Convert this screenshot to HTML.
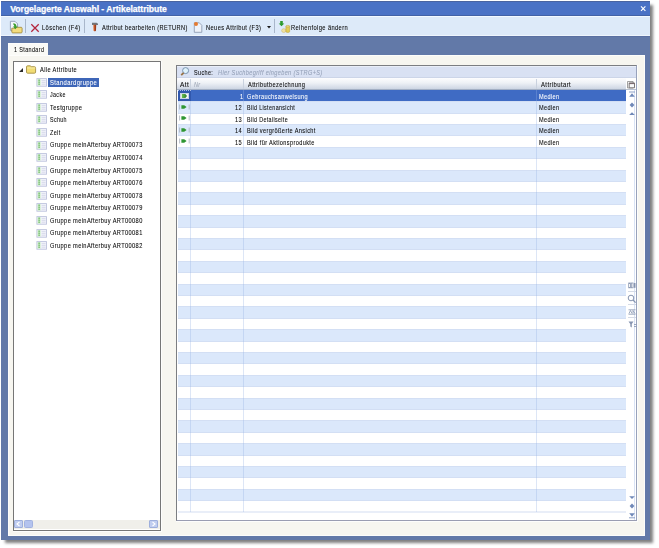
<!DOCTYPE html><html><head><meta charset="utf-8"><style>
*{margin:0;padding:0;box-sizing:border-box}
html,body{width:659px;height:548px;background:#fff;overflow:hidden;font-family:"Liberation Sans",sans-serif;font-size:7.4px;color:#080808}
div,span,svg{position:absolute}
.t{white-space:pre;line-height:12px;height:12px;transform-origin:0 0;letter-spacing:0.5px;-webkit-text-stroke:0.08px currentColor}
</style></head><body>
<div style="left:5px;top:5px;width:648px;height:538px;background:rgba(0,0,0,0.5);filter:blur(1.5px)"></div>
<div style="left:1px;top:1px;width:649px;height:539px;background:#6279a8"></div>
<div style="left:1px;top:1px;width:649px;height:15px;background:#4a72c5;border-top:1px solid #4a64a0;border-bottom:1px solid #4262a6"></div>
<span style="left:10.3px;top:4.1px;white-space:pre;color:#fff;font-weight:bold;font-size:8.6px;line-height:11px;letter-spacing:-0.03px;-webkit-text-stroke:0.25px #fff">Vorgelagerte Auswahl - Artikelattribute</span>
<svg style="left:638px;top:3px" width="10" height="10" viewBox="0 0 10 10"><path d="M3 3.4L7.4 7.8M7.4 3.4L3 7.8" stroke="#fff" stroke-width="1.15"/></svg>
<div style="left:1px;top:16px;width:649px;height:20px;background:#ddeaf9;border-top:1px solid #f2f9ff;border-bottom:1px solid #eef5fd"></div>
<div style="left:1px;top:36px;width:649px;height:1px;background:#5a70a2"></div>
<svg style="left:9px;top:20px" width="14" height="14" viewBox="0 0 14 14"><path d="M1.4 1.3h4.6l2.6 2.6v6.5H1.4z" fill="#f4f7fc" stroke="#8e9cb6" stroke-width="0.9"/><path d="M2.8 8.2h3l0.8-0.9h5.6c0.5 0 0.9 0.4 0.9 0.9v3.8c0 0.5-0.4 0.9-0.9 0.9H3.7c-0.5 0-0.9-0.4-0.9-0.9z" fill="#f3dc7e" stroke="#9c8436" stroke-width="0.8"/><path d="M4.3 3.2c1.8 0.2 3 1 3.1 2.6v0.8h1.3L6.3 9.2 3.9 6.6h1.3V6c0-0.8-0.4-1.4-0.9-1.6z" fill="#3d9d2d"/></svg>
<div style="left:25px;top:19px;width:1px;height:14px;background:#a9b7cb"></div>
<svg style="left:30px;top:23px" width="10" height="10" viewBox="0 0 10 10"><path d="M1.3 1.3L8.7 8.7M8.7 1.3L1.3 8.7" stroke="#b3243c" stroke-width="1.25"/></svg>
<span class="t" style="left:41.6px;top:21.93px;transform:scaleX(0.7781);">Löschen (F4)</span>
<div style="left:84px;top:19px;width:1px;height:14px;background:#a9b7cb"></div>
<svg style="left:91px;top:22px" width="8" height="10" viewBox="0 0 8 10"><defs><linearGradient id="hg" x1="0" x2="1"><stop offset="0" stop-color="#e8763a"/><stop offset="1" stop-color="#8a2a12"/></linearGradient></defs><path d="M1 0.8h4.6l1.4 0.9v1.2H1z" fill="#71767c"/><path d="M2.3 2.8h2.9l-0.2 5.6c0 0.5-0.6 0.8-1.25 0.8s-1.25-0.3-1.25-0.8z" fill="url(#hg)"/></svg>
<span class="t" style="left:102.0px;top:21.93px;transform:scaleX(0.7635);">Attribut bearbeiten (RETURN)</span>
<svg style="left:193px;top:21px" width="10" height="12" viewBox="0 0 10 12"><path d="M1.3 1.8h5l2.5 2.5v7H1.3z" fill="#eef2f9" stroke="#8593ab" stroke-width="0.8"/><circle cx="3" cy="2.9" r="2" fill="#e57a30"/></svg>
<span class="t" style="left:206.3px;top:21.93px;transform:scaleX(0.7722);">Neues Attribut (F3)</span>
<svg style="left:267px;top:25.5px" width="4" height="3" viewBox="0 0 4 3"><path d="M0 0h4L2 2.4z" fill="#1a1a1a"/></svg>
<div style="left:274px;top:19px;width:1px;height:14px;background:#a9b7cb"></div>
<svg style="left:278px;top:20px" width="13" height="14" viewBox="0 0 13 14"><path d="M2.2 1h2.6v2.4h1.5L3.5 6.3 0.7 3.4h1.5z" fill="#2c9a2e"/><ellipse cx="5.8" cy="10.6" rx="2.2" ry="1.9" fill="#efe0a0" stroke="#c9b269" stroke-width="0.5"/><path d="M7.9 6.2h3.8v5.2c0 0.6-0.85 1-1.9 1s-1.9-0.4-1.9-1z" fill="#e2cc58" stroke="#b59a3c" stroke-width="0.5"/><ellipse cx="9.8" cy="6.2" rx="1.9" ry="0.8" fill="#f2e28e" stroke="#b59a3c" stroke-width="0.45"/></svg>
<span class="t" style="left:290.9px;top:21.93px;transform:scaleX(0.7764);">Reihenfolge ändern</span>
<div style="left:8px;top:43px;width:40px;height:13px;background:#fafaf6;border-left:1px solid #fdfdfc;border-top:1px solid #fdfdfc"></div>
<span class="t" style="left:13.7px;top:43.93px;transform:scaleX(0.7374);">1 Standard</span>
<div style="left:8px;top:55px;width:637px;height:481px;background:#f7f6f0;border:1px solid #fdfdfb"></div>
<div style="left:13px;top:61px;width:149px;height:471px;border-right:1px solid #fdfdfc;border-bottom:1px solid #fdfdfc"></div>
<div style="left:13px;top:61px;width:148px;height:470px;background:#fff;border:1px solid #767676"></div>
<svg style="left:19px;top:68px" width="4" height="4" viewBox="0 0 4 4"><path d="M4 0V4H0z" fill="#2a2a2a"/></svg>
<svg style="left:26px;top:64.5px" width="11" height="9" viewBox="0 0 11 9"><path d="M1.6 0.8h2.6l0.9 0.9h3.4c0.7 0 1.1 0.4 1.1 1.1v4.3c0 0.7-0.4 1.1-1.1 1.1H1.6c-0.7 0-1.1-0.4-1.1-1.1V1.9c0-0.7 0.4-1.1 1.1-1.1z" fill="#f1dc74" stroke="#a58f45" stroke-width="0.9"/><path d="M1.2 3h8.2" stroke="#faf0b8" stroke-width="0.8"/></svg>
<span class="t" style="left:39.6px;top:64.03px;transform:scaleX(0.7662);">Alle Attribute</span>
<svg style="left:36px;top:77.67px" width="11" height="9" viewBox="0 0 11 9"><rect x="0.9" y="0.6" width="9.6" height="7.6" fill="#f3f4fb" stroke="#bcc2dc" stroke-width="0.9"/><rect x="1.6" y="1.2" width="3" height="6.4" fill="#cdeec5"/><path d="M3.1 1.6v1.2M3.1 3.6v1.2M3.1 5.6v1.2" stroke="#3f9a45" stroke-width="1"/><path d="M5.6 2.6h4M5.6 4.4h4M5.6 6.2h4" stroke="#d0d4e6" stroke-width="0.8"/></svg>
<div style="left:48px;top:77.57px;width:51px;height:9.3px;background:#3e66b8"></div>
<span class="t" style="left:50.1px;top:76.6px;transform:scaleX(0.7862);color:#fff">Standardgruppe</span>
<svg style="left:36px;top:90.24px" width="11" height="9" viewBox="0 0 11 9"><rect x="0.9" y="0.6" width="9.6" height="7.6" fill="#f3f4fb" stroke="#bcc2dc" stroke-width="0.9"/><rect x="1.6" y="1.2" width="3" height="6.4" fill="#cdeec5"/><path d="M3.1 1.6v1.2M3.1 3.6v1.2M3.1 5.6v1.2" stroke="#3f9a45" stroke-width="1"/><path d="M5.6 2.6h4M5.6 4.4h4M5.6 6.2h4" stroke="#d0d4e6" stroke-width="0.8"/></svg>
<span class="t" style="left:50.1px;top:89.17px;transform:scaleX(0.7218);">Jacke</span>
<svg style="left:36px;top:102.81px" width="11" height="9" viewBox="0 0 11 9"><rect x="0.9" y="0.6" width="9.6" height="7.6" fill="#f3f4fb" stroke="#bcc2dc" stroke-width="0.9"/><rect x="1.6" y="1.2" width="3" height="6.4" fill="#cdeec5"/><path d="M3.1 1.6v1.2M3.1 3.6v1.2M3.1 5.6v1.2" stroke="#3f9a45" stroke-width="1"/><path d="M5.6 2.6h4M5.6 4.4h4M5.6 6.2h4" stroke="#d0d4e6" stroke-width="0.8"/></svg>
<span class="t" style="left:50.1px;top:101.74px;transform:scaleX(0.7789);">Testgruppe</span>
<svg style="left:36px;top:115.38px" width="11" height="9" viewBox="0 0 11 9"><rect x="0.9" y="0.6" width="9.6" height="7.6" fill="#f3f4fb" stroke="#bcc2dc" stroke-width="0.9"/><rect x="1.6" y="1.2" width="3" height="6.4" fill="#cdeec5"/><path d="M3.1 1.6v1.2M3.1 3.6v1.2M3.1 5.6v1.2" stroke="#3f9a45" stroke-width="1"/><path d="M5.6 2.6h4M5.6 4.4h4M5.6 6.2h4" stroke="#d0d4e6" stroke-width="0.8"/></svg>
<span class="t" style="left:50.1px;top:114.31px;transform:scaleX(0.7222);">Schuh</span>
<svg style="left:36px;top:127.95px" width="11" height="9" viewBox="0 0 11 9"><rect x="0.9" y="0.6" width="9.6" height="7.6" fill="#f3f4fb" stroke="#bcc2dc" stroke-width="0.9"/><rect x="1.6" y="1.2" width="3" height="6.4" fill="#cdeec5"/><path d="M3.1 1.6v1.2M3.1 3.6v1.2M3.1 5.6v1.2" stroke="#3f9a45" stroke-width="1"/><path d="M5.6 2.6h4M5.6 4.4h4M5.6 6.2h4" stroke="#d0d4e6" stroke-width="0.8"/></svg>
<span class="t" style="left:50.1px;top:126.88px;transform:scaleX(0.7336);">Zelt</span>
<svg style="left:36px;top:140.52px" width="11" height="9" viewBox="0 0 11 9"><rect x="0.9" y="0.6" width="9.6" height="7.6" fill="#f3f4fb" stroke="#bcc2dc" stroke-width="0.9"/><rect x="1.6" y="1.2" width="3" height="6.4" fill="#cdeec5"/><path d="M3.1 1.6v1.2M3.1 3.6v1.2M3.1 5.6v1.2" stroke="#3f9a45" stroke-width="1"/><path d="M5.6 2.6h4M5.6 4.4h4M5.6 6.2h4" stroke="#d0d4e6" stroke-width="0.8"/></svg>
<span class="t" style="left:50.1px;top:139.45px;transform:scaleX(0.7652);">Gruppe meinAfterbuy ART00073</span>
<svg style="left:36px;top:153.09px" width="11" height="9" viewBox="0 0 11 9"><rect x="0.9" y="0.6" width="9.6" height="7.6" fill="#f3f4fb" stroke="#bcc2dc" stroke-width="0.9"/><rect x="1.6" y="1.2" width="3" height="6.4" fill="#cdeec5"/><path d="M3.1 1.6v1.2M3.1 3.6v1.2M3.1 5.6v1.2" stroke="#3f9a45" stroke-width="1"/><path d="M5.6 2.6h4M5.6 4.4h4M5.6 6.2h4" stroke="#d0d4e6" stroke-width="0.8"/></svg>
<span class="t" style="left:50.1px;top:152.02px;transform:scaleX(0.7652);">Gruppe meinAfterbuy ART00074</span>
<svg style="left:36px;top:165.66px" width="11" height="9" viewBox="0 0 11 9"><rect x="0.9" y="0.6" width="9.6" height="7.6" fill="#f3f4fb" stroke="#bcc2dc" stroke-width="0.9"/><rect x="1.6" y="1.2" width="3" height="6.4" fill="#cdeec5"/><path d="M3.1 1.6v1.2M3.1 3.6v1.2M3.1 5.6v1.2" stroke="#3f9a45" stroke-width="1"/><path d="M5.6 2.6h4M5.6 4.4h4M5.6 6.2h4" stroke="#d0d4e6" stroke-width="0.8"/></svg>
<span class="t" style="left:50.1px;top:164.59px;transform:scaleX(0.7652);">Gruppe meinAfterbuy ART00075</span>
<svg style="left:36px;top:178.23px" width="11" height="9" viewBox="0 0 11 9"><rect x="0.9" y="0.6" width="9.6" height="7.6" fill="#f3f4fb" stroke="#bcc2dc" stroke-width="0.9"/><rect x="1.6" y="1.2" width="3" height="6.4" fill="#cdeec5"/><path d="M3.1 1.6v1.2M3.1 3.6v1.2M3.1 5.6v1.2" stroke="#3f9a45" stroke-width="1"/><path d="M5.6 2.6h4M5.6 4.4h4M5.6 6.2h4" stroke="#d0d4e6" stroke-width="0.8"/></svg>
<span class="t" style="left:50.1px;top:177.16px;transform:scaleX(0.7652);">Gruppe meinAfterbuy ART00076</span>
<svg style="left:36px;top:190.8px" width="11" height="9" viewBox="0 0 11 9"><rect x="0.9" y="0.6" width="9.6" height="7.6" fill="#f3f4fb" stroke="#bcc2dc" stroke-width="0.9"/><rect x="1.6" y="1.2" width="3" height="6.4" fill="#cdeec5"/><path d="M3.1 1.6v1.2M3.1 3.6v1.2M3.1 5.6v1.2" stroke="#3f9a45" stroke-width="1"/><path d="M5.6 2.6h4M5.6 4.4h4M5.6 6.2h4" stroke="#d0d4e6" stroke-width="0.8"/></svg>
<span class="t" style="left:50.1px;top:189.73px;transform:scaleX(0.7652);">Gruppe meinAfterbuy ART00078</span>
<svg style="left:36px;top:203.37px" width="11" height="9" viewBox="0 0 11 9"><rect x="0.9" y="0.6" width="9.6" height="7.6" fill="#f3f4fb" stroke="#bcc2dc" stroke-width="0.9"/><rect x="1.6" y="1.2" width="3" height="6.4" fill="#cdeec5"/><path d="M3.1 1.6v1.2M3.1 3.6v1.2M3.1 5.6v1.2" stroke="#3f9a45" stroke-width="1"/><path d="M5.6 2.6h4M5.6 4.4h4M5.6 6.2h4" stroke="#d0d4e6" stroke-width="0.8"/></svg>
<span class="t" style="left:50.1px;top:202.3px;transform:scaleX(0.7652);">Gruppe meinAfterbuy ART00079</span>
<svg style="left:36px;top:215.94px" width="11" height="9" viewBox="0 0 11 9"><rect x="0.9" y="0.6" width="9.6" height="7.6" fill="#f3f4fb" stroke="#bcc2dc" stroke-width="0.9"/><rect x="1.6" y="1.2" width="3" height="6.4" fill="#cdeec5"/><path d="M3.1 1.6v1.2M3.1 3.6v1.2M3.1 5.6v1.2" stroke="#3f9a45" stroke-width="1"/><path d="M5.6 2.6h4M5.6 4.4h4M5.6 6.2h4" stroke="#d0d4e6" stroke-width="0.8"/></svg>
<span class="t" style="left:50.1px;top:214.87px;transform:scaleX(0.7652);">Gruppe meinAfterbuy ART00080</span>
<svg style="left:36px;top:228.51px" width="11" height="9" viewBox="0 0 11 9"><rect x="0.9" y="0.6" width="9.6" height="7.6" fill="#f3f4fb" stroke="#bcc2dc" stroke-width="0.9"/><rect x="1.6" y="1.2" width="3" height="6.4" fill="#cdeec5"/><path d="M3.1 1.6v1.2M3.1 3.6v1.2M3.1 5.6v1.2" stroke="#3f9a45" stroke-width="1"/><path d="M5.6 2.6h4M5.6 4.4h4M5.6 6.2h4" stroke="#d0d4e6" stroke-width="0.8"/></svg>
<span class="t" style="left:50.1px;top:227.44px;transform:scaleX(0.7652);">Gruppe meinAfterbuy ART00081</span>
<svg style="left:36px;top:241.08px" width="11" height="9" viewBox="0 0 11 9"><rect x="0.9" y="0.6" width="9.6" height="7.6" fill="#f3f4fb" stroke="#bcc2dc" stroke-width="0.9"/><rect x="1.6" y="1.2" width="3" height="6.4" fill="#cdeec5"/><path d="M3.1 1.6v1.2M3.1 3.6v1.2M3.1 5.6v1.2" stroke="#3f9a45" stroke-width="1"/><path d="M5.6 2.6h4M5.6 4.4h4M5.6 6.2h4" stroke="#d0d4e6" stroke-width="0.8"/></svg>
<span class="t" style="left:50.1px;top:240.01px;transform:scaleX(0.7652);">Gruppe meinAfterbuy ART00082</span>
<div style="left:14px;top:520px;width:146px;height:9px;background:#f0efea"></div>
<div style="left:14px;top:520px;width:9px;height:8px;background:#c0cdf0;border:1px solid #9eafdc;border-radius:1px"></div>
<svg style="left:15px;top:521px" width="7" height="6" viewBox="0 0 7 6"><path d="M4.5 0.8L2 3l2.5 2.2" fill="none" stroke="#fff" stroke-width="1.1"/></svg>
<div style="left:23.5px;top:520px;width:9px;height:8px;background:#b4c3ee;border:1px solid #a2b2e0;border-radius:1.5px"></div>
<div style="left:149px;top:520px;width:9px;height:8px;background:#c0cdf0;border:1px solid #9eafdc;border-radius:1px"></div>
<svg style="left:150px;top:521px" width="7" height="6" viewBox="0 0 7 6"><path d="M2.5 0.8L5 3 2.5 5.2" fill="none" stroke="#fff" stroke-width="1.1"/></svg>
<div style="left:176px;top:65px;width:462px;height:457px;border-right:1px solid #fdfdfc;border-bottom:1px solid #fdfdfc"></div>
<div style="left:176px;top:65px;width:461px;height:456px;background:#fff;border:1px solid #7c7e82;border-right-color:#98a2bb;border-bottom-color:#9a9db2"></div>
<div style="left:634px;top:90px;width:1px;height:430px;background:#d9e3f5"></div>
<div style="left:177px;top:66px;width:459px;height:12px;background:#d9e1f3;border-top:1px solid #eaeff9;border-bottom:1px solid #ccd5e8"></div>
<svg style="left:179px;top:66px" width="11" height="11" viewBox="0 0 11 11"><circle cx="6.6" cy="4.6" r="3" fill="#dff2fb" stroke="#6f8aa6" stroke-width="0.9"/><path d="M4.6 6.8L2.2 9.2" stroke="#9a7446" stroke-width="1.8"/></svg>
<span class="t" style="left:193.5px;top:67.43px;transform:scaleX(0.7385);">Suche:</span>
<span class="t" style="left:217.8px;top:67.43px;transform:scaleX(0.7512);color:#95a1b8;font-style:italic">Hier Suchbegriff eingeben (STRG+S)</span>
<div style="left:177px;top:78px;width:449px;height:12px;background:linear-gradient(#fdfdfe 0%,#eef1f6 45%,#cdd5e3 100%);border-bottom:1px solid #a3afc4"></div>
<span class="t" style="left:180.0px;top:79.33px;transform:scaleX(0.8815);">Att</span>
<div style="left:190px;top:79px;width:1px;height:10px;background:#c9d1de"></div>
<span class="t" style="left:193.9px;top:79.33px;transform:scaleX(0.7468);font-style:italic;color:#a0a9b8">Nr</span>
<div style="left:243px;top:79px;width:1px;height:10px;background:#c9d1de"></div>
<span class="t" style="left:247.8px;top:79.33px;transform:scaleX(0.7653);">Attributbezeichnung</span>
<div style="left:536px;top:79px;width:1px;height:10px;background:#c9d1de"></div>
<span class="t" style="left:540.5px;top:79.33px;transform:scaleX(0.8003);">Attributart</span>
<svg style="left:626px;top:80px" width="10" height="10" viewBox="0 0 10 10"><path d="M1.5 1.5h5.6v6.5H1.5z" fill="#f4f4f4" stroke="#8a8a8a" stroke-width="0.8"/><path d="M3.2 3h5.3v4.8H3.2z" fill="#fbfbfb" stroke="#6e6a6a" stroke-width="0.9"/><path d="M3.2 3.5h5.3" stroke="#7a6c70" stroke-width="1.2"/></svg>
<div style="left:626px;top:89px;width:10px;height:1px;background:#b9c3d4"></div>
<div style="left:178px;top:90px;width:448px;height:12px;background:#3f6bc4"></div>
<div style="left:178px;top:101px;width:448px;height:13px;background:#dbe8fb;border-top:1px solid #d3dff4;border-bottom:1px solid #d3dff4"></div>
<div style="left:178px;top:124px;width:448px;height:12px;background:#dbe8fb;border-top:1px solid #d3dff4;border-bottom:1px solid #d3dff4"></div>
<div style="left:178px;top:147px;width:448px;height:12px;background:#dbe8fb;border-top:1px solid #d3dff4;border-bottom:1px solid #d3dff4"></div>
<div style="left:178px;top:170px;width:448px;height:12px;background:#dbe8fb;border-top:1px solid #d3dff4;border-bottom:1px solid #d3dff4"></div>
<div style="left:178px;top:192px;width:448px;height:13px;background:#dbe8fb;border-top:1px solid #d3dff4;border-bottom:1px solid #d3dff4"></div>
<div style="left:178px;top:215px;width:448px;height:13px;background:#dbe8fb;border-top:1px solid #d3dff4;border-bottom:1px solid #d3dff4"></div>
<div style="left:178px;top:238px;width:448px;height:12px;background:#dbe8fb;border-top:1px solid #d3dff4;border-bottom:1px solid #d3dff4"></div>
<div style="left:178px;top:261px;width:448px;height:12px;background:#dbe8fb;border-top:1px solid #d3dff4;border-bottom:1px solid #d3dff4"></div>
<div style="left:178px;top:284px;width:448px;height:12px;background:#dbe8fb;border-top:1px solid #d3dff4;border-bottom:1px solid #d3dff4"></div>
<div style="left:178px;top:306px;width:448px;height:13px;background:#dbe8fb;border-top:1px solid #d3dff4;border-bottom:1px solid #d3dff4"></div>
<div style="left:178px;top:329px;width:448px;height:13px;background:#dbe8fb;border-top:1px solid #d3dff4;border-bottom:1px solid #d3dff4"></div>
<div style="left:178px;top:352px;width:448px;height:12px;background:#dbe8fb;border-top:1px solid #d3dff4;border-bottom:1px solid #d3dff4"></div>
<div style="left:178px;top:375px;width:448px;height:12px;background:#dbe8fb;border-top:1px solid #d3dff4;border-bottom:1px solid #d3dff4"></div>
<div style="left:178px;top:398px;width:448px;height:12px;background:#dbe8fb;border-top:1px solid #d3dff4;border-bottom:1px solid #d3dff4"></div>
<div style="left:178px;top:420px;width:448px;height:13px;background:#dbe8fb;border-top:1px solid #d3dff4;border-bottom:1px solid #d3dff4"></div>
<div style="left:178px;top:443px;width:448px;height:13px;background:#dbe8fb;border-top:1px solid #d3dff4;border-bottom:1px solid #d3dff4"></div>
<div style="left:178px;top:466px;width:448px;height:12px;background:#dbe8fb;border-top:1px solid #d3dff4;border-bottom:1px solid #d3dff4"></div>
<div style="left:178px;top:489px;width:448px;height:12px;background:#dbe8fb;border-top:1px solid #d3dff4;border-bottom:1px solid #d3dff4"></div>
<div style="left:178px;top:511px;width:448px;height:2px;background:#e9eef8"></div>
<div style="left:190px;top:90px;width:1px;height:422px;background:rgba(150,178,228,0.32)"></div>
<div style="left:243px;top:90px;width:1px;height:422px;background:rgba(150,178,228,0.32)"></div>
<div style="left:536px;top:90px;width:1px;height:422px;background:rgba(150,178,228,0.32)"></div>
<div style="left:178px;top:90px;width:13px;height:11px;background:#3158ad;border-top:1px dotted #a9bde8"></div>
<div style="left:180px;top:93px;width:9px;height:6px;background:#f3f6fb;border:1px solid #c8d2e6"></div>
<svg style="left:181px;top:93px" width="8" height="6" viewBox="0 0 8 6"><defs><linearGradient id="fg" x1="0" x2="1"><stop offset="0" stop-color="#6cc050"/><stop offset="1" stop-color="#2a7a2a"/></linearGradient></defs><path d="M0.8 1h3.6l1.6 2-1.6 2H0.8z" fill="url(#fg)"/></svg>
<span class="t" style="left:239.9px;top:90.93px;transform:scaleX(0.7701);color:#fff">1</span>
<span class="t" style="left:246.5px;top:90.93px;transform:scaleX(0.7562);color:#fff">Gebrauchsanweisung</span>
<span class="t" style="left:539.0px;top:90.93px;transform:scaleX(0.7548);color:#fff">Medien</span>
<svg style="left:179px;top:103.8px" width="11" height="6" viewBox="0 0 11 6"><path d="M0.6 0.5v5M10.2 0.5v5" stroke="#a7b0bd" stroke-width="0.8"/><path d="M2.4 1.2h2.8l2.4 1.8-2.4 1.8H2.4z" fill="#2f9633"/></svg>
<span class="t" style="left:235.3px;top:102.33px;transform:scaleX(0.7701);">12</span>
<span class="t" style="left:246.5px;top:102.33px;transform:scaleX(0.7231);">Bild Listenansicht</span>
<span class="t" style="left:539.0px;top:102.33px;transform:scaleX(0.7548);">Medien</span>
<svg style="left:179px;top:115.2px" width="11" height="6" viewBox="0 0 11 6"><path d="M0.6 0.5v5M10.2 0.5v5" stroke="#a7b0bd" stroke-width="0.8"/><path d="M2.4 1.2h2.8l2.4 1.8-2.4 1.8H2.4z" fill="#2f9633"/></svg>
<span class="t" style="left:235.3px;top:113.73px;transform:scaleX(0.7701);">13</span>
<span class="t" style="left:246.5px;top:113.73px;transform:scaleX(0.7215);">Bild Detailseite</span>
<span class="t" style="left:539.0px;top:113.73px;transform:scaleX(0.7548);">Medien</span>
<svg style="left:179px;top:126.6px" width="11" height="6" viewBox="0 0 11 6"><path d="M0.6 0.5v5M10.2 0.5v5" stroke="#a7b0bd" stroke-width="0.8"/><path d="M2.4 1.2h2.8l2.4 1.8-2.4 1.8H2.4z" fill="#2f9633"/></svg>
<span class="t" style="left:235.3px;top:125.13px;transform:scaleX(0.7701);">14</span>
<span class="t" style="left:246.5px;top:125.13px;transform:scaleX(0.7607);">Bild vergrößerte Ansicht</span>
<span class="t" style="left:539.0px;top:125.13px;transform:scaleX(0.7548);">Medien</span>
<svg style="left:179px;top:138.0px" width="11" height="6" viewBox="0 0 11 6"><path d="M0.6 0.5v5M10.2 0.5v5" stroke="#a7b0bd" stroke-width="0.8"/><path d="M2.4 1.2h2.8l2.4 1.8-2.4 1.8H2.4z" fill="#2f9633"/></svg>
<span class="t" style="left:235.3px;top:136.53px;transform:scaleX(0.7701);">15</span>
<span class="t" style="left:246.5px;top:136.53px;transform:scaleX(0.7558);">Bild für Aktionsprodukte</span>
<span class="t" style="left:539.0px;top:136.53px;transform:scaleX(0.7548);">Medien</span>
<svg style="left:628px;top:91px" width="8" height="7" viewBox="0 0 8 7"><path d="M1 1h6" stroke="#6f88b8" stroke-width="0.8"/><path d="M4 2.3L6.8 5.8H1.2z" fill="#6f88b8"/></svg>
<svg style="left:628px;top:101.5px" width="8" height="6" viewBox="0 0 8 6"><path d="M4 0.6L6.4 3 4 5.4 1.6 3z" fill="#6f88b8"/></svg>
<svg style="left:628px;top:111px" width="8" height="5" viewBox="0 0 8 5"><path d="M4 1.2L6.8 4H1.2z" fill="#6f88b8"/></svg>
<svg style="left:628px;top:495px" width="8" height="5" viewBox="0 0 8 5"><path d="M4 4L6.8 1.2H1.2z" fill="#6f88b8"/></svg>
<svg style="left:628px;top:503px" width="8" height="6" viewBox="0 0 8 6"><path d="M4 0.6L6.4 3 4 5.4 1.6 3z" fill="#6f88b8"/></svg>
<svg style="left:628px;top:511.5px" width="8" height="7" viewBox="0 0 8 7"><path d="M4 4.7L6.8 1.2H1.2z" fill="#6f88b8"/><path d="M1 5.8h6" stroke="#6f88b8" stroke-width="0.8"/></svg>
<svg style="left:628px;top:282px" width="8" height="7" viewBox="0 0 8 7"><rect x="0.7" y="1" width="1.8" height="4.8" fill="none" stroke="#8795b0" stroke-width="0.8"/><rect x="3.3" y="1" width="1.8" height="4.8" fill="none" stroke="#8795b0" stroke-width="0.8"/><rect x="5.9" y="1" width="1.6" height="4.8" fill="#8795b0"/></svg>
<div style="left:628px;top:291px;width:8px;height:1px;background:#d5dbe6"></div>
<svg style="left:627px;top:294px" width="10" height="9" viewBox="0 0 10 9"><circle cx="4" cy="4" r="2.8" fill="none" stroke="#8795b0" stroke-width="1"/><path d="M6 6l2.6 2.6" stroke="#8795b0" stroke-width="1.3"/></svg>
<div style="left:628px;top:304px;width:8px;height:1px;background:#d5dbe6"></div>
<svg style="left:628px;top:309px" width="8" height="6" viewBox="0 0 8 6"><path d="M0.5 0.8h7M0.5 5.2h7" stroke="#8795b0" stroke-width="0.8"/><path d="M1 4.5L2.5 1.5 4 4.5M5 4.5V1.5l2 3" fill="none" stroke="#8795b0" stroke-width="0.8"/></svg>
<div style="left:628px;top:317px;width:8px;height:1px;background:#d5dbe6"></div>
<svg style="left:628px;top:321px" width="9" height="7" viewBox="0 0 9 7"><path d="M0.5 0.5h5L3.8 3v3.5L2.3 5.5V3z" fill="#8795b0"/><path d="M6 3.5h2.5M6 5.5h2.5" stroke="#8795b0" stroke-width="0.8"/></svg>
</body></html>
